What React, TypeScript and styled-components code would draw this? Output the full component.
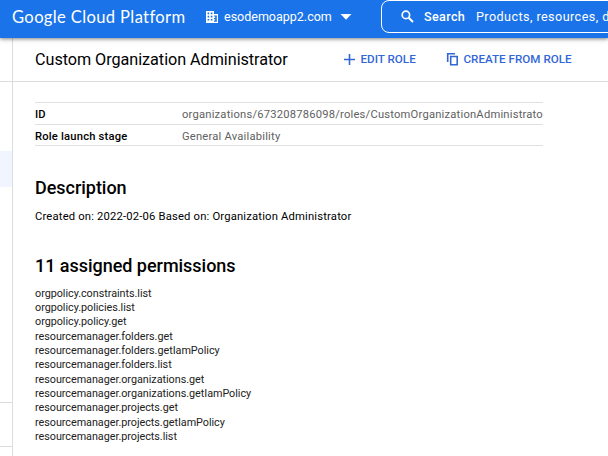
import React from "react";
import styled, { createGlobalStyle } from "styled-components";

const GlobalStyle = createGlobalStyle`
  * { box-sizing: border-box; }
  body {
    margin: 0;
    overflow: hidden;
    background: #fff;
    color: #000;
    font-family: Roboto, "Liberation Sans", sans-serif;
  }
  h1, h2, p, ul, dl, dd, dt { margin: 0; padding: 0; }
`;

const Page = styled.div`
  width: 608px;
  height: 456px;
  display: flex;
  flex-direction: column;
  overflow: hidden;
`;

const TopBar = styled.header`
  position: relative;
  flex: none;
  height: 38px;
  display: flex;
  align-items: flex-start;
  background: #1a73e8;
  color: #fff;
  white-space: nowrap;
  box-shadow: 0 1px 4px rgba(0, 0, 0, 0.5);
`;

const Brand = styled.div`
  width: 192px;
  flex: none;
  padding: 5px 0 0 12px;
  font: 400 16.6px/24px Lato, Roboto, sans-serif;
  letter-spacing: 0.35px;
`;

const ProjectPicker = styled.div`
  width: 189px;
  flex: none;
  height: 33px;
  display: flex;
  align-items: center;
  padding-left: 13px;
  font-size: 12.5px;
  letter-spacing: 0;
`;

const ProjectName = styled.span`
  width: 116px;
  margin-left: 5px;
`;

const SearchBox = styled.div`
  flex: none;
  width: 260px;
  height: 33px;
  display: flex;
  align-items: center;
  padding-left: 19px;
  border: 1px solid #fff;
  border-radius: 8px;
  font-size: 12.6px;
  letter-spacing: 0.43px;
`;

const SearchLabel = styled.span`
  width: 52px;
  margin-left: 10px;
  font-weight: 500;
  letter-spacing: 0.35px;
`;

const Columns = styled.div`
  flex: 1;
  display: flex;
  min-height: 0;
`;

const SideNav = styled.nav`
  flex: none;
  width: 13px;
  border-right: 1px solid #dadce0;
  display: flex;
  flex-direction: column;
`;

const NavCell = styled.div<{ $height: number; $active?: boolean; $line?: boolean }>`
  flex: none;
  height: ${(p) => p.$height}px;
  background: ${(p) => (p.$active ? "#f0f5ff" : "transparent")};
  border-bottom: ${(p) => (p.$line ? "1px solid #dadce0" : "none")};
`;

const Main = styled.main`
  flex: 1;
  min-width: 0;
`;

const Toolbar = styled.div`
  height: 44px;
  display: flex;
  align-items: center;
  padding-left: 22px;
  border-bottom: 1px solid #dadce0;
  white-space: nowrap;
`;

const Title = styled.h1`
  width: 308px;
  font-size: 16.2px;
  letter-spacing: -0.04px;
  font-weight: 400;
`;

const ActionButton = styled.button<{ $width: number }>`
  width: ${(p) => p.$width}px;
  flex: none;
  display: flex;
  align-items: center;
  gap: 4.5px;
  padding: 0 0 2px;
  border: 0;
  background: none;
  color: #3367d6;
  font: 500 11.65px/16px Roboto, sans-serif;
  white-space: nowrap;
`;

const Content = styled.section`
  padding: 20px 0 0 22px;
`;

const Details = styled.dl`
  width: 508px;
  border-top: 1px solid #e0e0e0;
  font-size: 11.2px;
`;

const DetailRow = styled.div<{ $height: number }>`
  height: ${(p) => p.$height}px;
  display: flex;
  align-items: center;
  padding-top: 2px;
  border-bottom: 1px solid #e0e0e0;
  white-space: nowrap;
`;

const Term = styled.dt`
  width: 147px;
  flex: none;
  font-weight: 500;
  letter-spacing: 0.2px;
`;

const Value = styled.dd`
  color: #616161;
  letter-spacing: 0.21px;
`;

const Heading = styled.h2<{ $top: number }>`
  margin-top: ${(p) => p.$top}px;
  font-size: 18px;
  letter-spacing: -0.03px;
  line-height: 24px;
  font-weight: 500;
`;

const Description = styled.p`
  margin-top: 9px;
  font-size: 11.25px;
  line-height: 16px;
  letter-spacing: 0.17px;
`;

const PermissionList = styled.ul`
  margin-top: 8.75px;
  list-style: none;
  font-size: 10.8px;
  letter-spacing: -0.03px;
  line-height: 14.33px;
  color: #212121;
`;

const permissions = [
  "orgpolicy.constraints.list",
  "orgpolicy.policies.list",
  "orgpolicy.policy.get",
  "resourcemanager.folders.get",
  "resourcemanager.folders.getIamPolicy",
  "resourcemanager.folders.list",
  "resourcemanager.organizations.get",
  "resourcemanager.organizations.getIamPolicy",
  "resourcemanager.projects.get",
  "resourcemanager.projects.getIamPolicy",
  "resourcemanager.projects.list",
];

const OrganizationIcon = () => (
  <svg width="14" height="14" viewBox="0 0 14 14">
    <path fill="currentColor" d="M1 1h8v3h4v9H1z" />
    <path
      fill="#1a73e8"
      d="M2.6 2.6h1.6v1.6H2.6zM5.8 2.6h1.6v1.6H5.8zM2.6 5.8h1.6v1.6H2.6zM5.8 5.8h1.6v1.6H5.8zM2.6 9h1.6v1.6H2.6zM5.8 9h1.6v1.6H5.8zM9 5.4h2.8v6.3H9v-1.1h1.2V9.2H9V7.9h1.2V6.5H9z"
    />
  </svg>
);

const CaretIcon = () => (
  <svg width="12" height="6" viewBox="0 0 12 6" fill="currentColor">
    <path d="M0.5 0h11L6 5.8z" />
  </svg>
);

const SearchIcon = () => (
  <svg width="13" height="13" viewBox="0 0 13 13" fill="none" stroke="currentColor">
    <circle cx="4.9" cy="4.9" r="3.7" strokeWidth="1.7" />
    <path d="M7.7 7.7l4.3 4.3" strokeWidth="2" />
  </svg>
);

const PlusIcon = () => (
  <svg width="13" height="12" viewBox="0 0 13 12" fill="none" stroke="currentColor" strokeWidth="1.6">
    <path d="M1 6.5h11M6.5 1v11" />
  </svg>
);

const CopyIcon = () => (
  <svg width="13" height="14" viewBox="0 0 13 14" fill="none" stroke="currentColor" strokeWidth="1.6">
    <path d="M1.7 10V1.7H9" />
    <path d="M4.7 4.5h6.5v8.2H4.7z" />
  </svg>
);

export default function App() {
  return (
    <Page>
      <GlobalStyle />
      <TopBar>
        <Brand>Google Cloud Platform</Brand>
        <ProjectPicker>
          <OrganizationIcon />
          <ProjectName>esodemoapp2.com</ProjectName>
          <CaretIcon />
        </ProjectPicker>
        <SearchBox>
          <SearchIcon />
          <SearchLabel>Search</SearchLabel>
          <span>Products, resources, docs</span>
        </SearchBox>
      </TopBar>
      <Columns>
        <SideNav>
          <NavCell $height={44} $line />
          <NavCell $height={69} />
          <NavCell $height={36} $active />
          <NavCell $height={216} $line />
          <NavCell $height={44} $line />
        </SideNav>
        <Main>
          <Toolbar>
            <Title>Custom Organization Administrator</Title>
            <ActionButton $width={103}>
              <PlusIcon />
              EDIT ROLE
            </ActionButton>
            <ActionButton $width={130}>
              <CopyIcon />
              CREATE FROM ROLE
            </ActionButton>
          </Toolbar>
          <Content>
            <Details>
              <DetailRow $height={22}>
                <Term>ID</Term>
                <Value>organizations/673208786098/roles/CustomOrganizationAdministrato</Value>
              </DetailRow>
              <DetailRow $height={21}>
                <Term>Role launch stage</Term>
                <Value>General Availability</Value>
              </DetailRow>
            </Details>
            <Heading $top={30}>Description</Heading>
            <Description>Created on: 2022-02-06 Based on: Organization Administrator</Description>
            <Heading $top={29}>11 assigned permissions</Heading>
            <PermissionList>
              {permissions.map((name) => (
                <li key={name}>{name}</li>
              ))}
            </PermissionList>
          </Content>
        </Main>
      </Columns>
    </Page>
  );
}
